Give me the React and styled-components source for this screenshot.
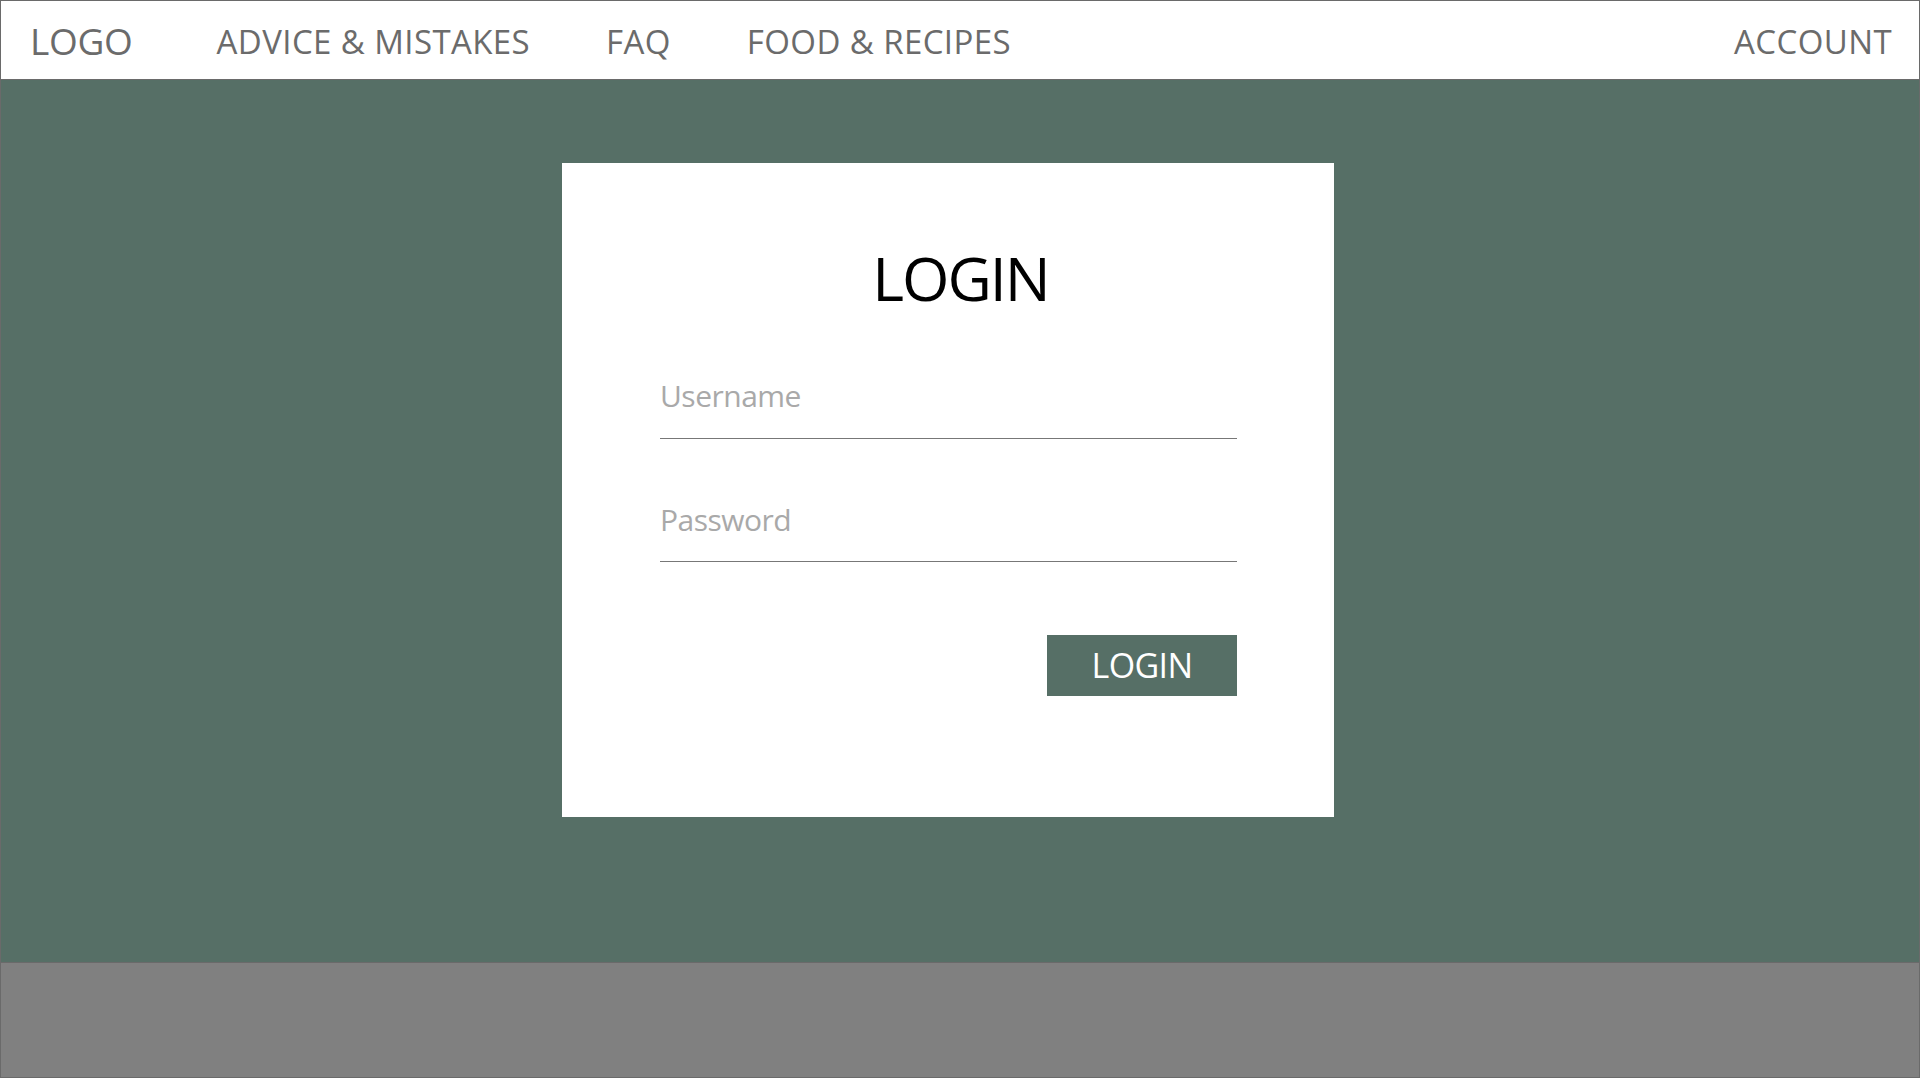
import React from 'react';
import styled, { createGlobalStyle } from 'styled-components';

// Global reset
const GlobalStyle = createGlobalStyle`
  html, body {
    margin: 0;
    padding: 0;
    background: #ffffff;
  }
  * {
    box-sizing: border-box;
  }
`;

// Page frame with thin grey outline
const Page = styled.div`
  display: flex;
  flex-direction: column;
  height: 1078px;
  border: 1px solid #6a6a6a;
  font-family: "Open Sans", "Noto Sans", sans-serif;
`;

// Top navigation bar
const Header = styled.header`
  display: flex;
  align-items: center;
  height: 79px;
  padding: 4px 27px 0 29px;
  background: #ffffff;
  border-bottom: 1px solid #6a6a6a;
`;

const Logo = styled.div`
  font-size: 37px;
  line-height: 38px;
  color: #6b6b6b;
  margin-right: 84px;
  letter-spacing: -0.3px;
  margin-top: -2px;
`;

const NavLink = styled.a`
  font-size: 33px;
  line-height: 34px;
  color: #6b6b6b;
  text-decoration: none;
  margin-right: ${(p) => (p.last ? '0' : '76px')};
  margin-left: ${(p) => (p.push ? 'auto' : '0')};
  letter-spacing: 0.4px;
  cursor: pointer;
`;

// Green main area
const Main = styled.main`
  flex: 1;
  background: #566f66;
  padding: 83px 24px 0 0;
  border-bottom: 1px solid #6a6a6a;
`;

const Card = styled.div`
  width: 772px;
  height: 654px;
  margin: 0 auto;
  background: #ffffff;
  padding: 84px 97px 0 98px;
  display: flex;
  flex-direction: column;
`;

const Title = styled.h1`
  margin: 0 0 72px;
  padding-left: 24px;
  text-align: center;
  font-weight: 400;
  font-size: 61px;
  line-height: 61px;
  color: #000000;
  letter-spacing: -2px;
`;

const Input = styled.input`
  display: block;
  width: 100%;
  height: ${(p) => p.h}px;
  margin: 0 0 ${(p) => p.gap}px;
  padding: 0 0 ${(p) => p.h - 32}px;
  border: none;
  border-bottom: 1px solid #777777;
  outline: none;
  background: transparent;
  font-family: "Open Sans", "Noto Sans", sans-serif;
  font-size: 30px;
  line-height: 31px;
  color: #333333;
  letter-spacing: -0.5px;

  &::placeholder {
    color: #a9a9a9;
  }
`;

const Actions = styled.div`
  display: flex;
  justify-content: flex-end;
`;

const Button = styled.button`
  width: 190px;
  height: 61px;
  border: none;
  background: #566f66;
  color: #ffffff;
  font-family: "Open Sans", "Noto Sans", sans-serif;
  font-size: 34px;
  line-height: 61px;
  padding: 0;
  letter-spacing: -0.6px;
  cursor: pointer;
`;

// Grey footer strip
const Footer = styled.footer`
  height: 114px;
  background: #808080;
`;

const App = () => {
  return (
    <>
      <GlobalStyle />
      <Page>
        {/* NAVIGATION */}
        <Header>
          <Logo>LOGO</Logo>
          <NavLink>ADVICE &amp; MISTAKES</NavLink>
          <NavLink>FAQ</NavLink>
          <NavLink>FOOD &amp; RECIPES</NavLink>
          <NavLink push last>ACCOUNT</NavLink>
        </Header>

        {/* LOGIN FORM */}
        <Main>
          <Card>
            <Title>LOGIN</Title>
            <Input type="text" placeholder="Username" h={59} gap={65} />
            <Input type="password" placeholder="Password" h={58} gap={73} />
            <Actions>
              <Button>LOGIN</Button>
            </Actions>
          </Card>
        </Main>

        <Footer />
      </Page>
    </>
  );
};

export default App;
